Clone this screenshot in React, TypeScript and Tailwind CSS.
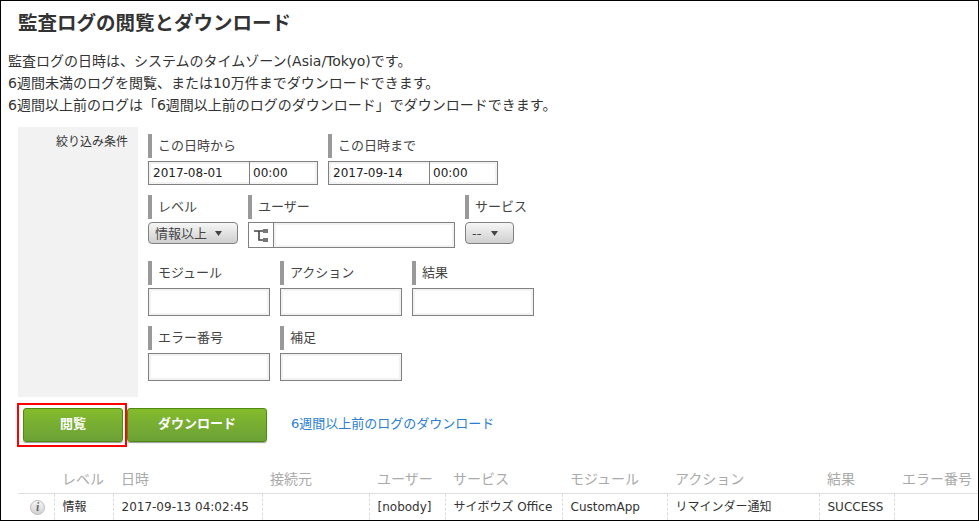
const font = '[font-family:"DejaVu_Sans","Noto_Sans_CJK_JP",sans-serif]'

const Field = ({ label, className, children }: { label: string; className: string; children: React.ReactNode }) => (
    <div className={className}>
        <div className="h-[24px] border-l-[4px] border-[#999999] pl-[6px] text-[13px] leading-[24px] text-[#444444]">{label}</div>
        <div className="mt-[3px]">{children}</div>
    </div>
)

const TextBox = ({ className }: { className: string }) => (
    <div className={`border border-[#808080] bg-white shadow-[inset_0_0_0_2px_#f2f2f2] ${className}`} />
)

const DateBox = ({ date }: { date: string }) => (
    <div className="flex h-[24px] w-[170px] border border-[#808080] bg-white text-[12px] leading-[23px] text-[#222222] shadow-[inset_0_0_0_2px_#f2f2f2]">
        <div className="w-[101px] border-r border-[#808080] pl-[4px]">{date}</div>
        <div className="pl-[3px]">00:00</div>
    </div>
)

const SelectButton = ({ label, className }: { label: string; className: string }) => (
    <div className={`flex h-[22px] items-center rounded-[4px] border border-[#808080] bg-gradient-to-b from-[#f6f6f6] to-[#cfcfcf] pl-[6px] text-[13px] leading-none text-[#444444] ${className}`}>
        <span>{label}</span>
        <svg className="ml-auto mr-[15px]" width="7" height="5" viewBox="0 0 7 5">
            <path d="M0 0h7L3.5 5z" fill="#444444" />
        </svg>
    </div>
)

const columns = [
    { label: '', value: '', width: 'w-[36px]' },
    { label: 'レベル', value: '情報', width: 'w-[59px]' },
    { label: '日時', value: '2017-09-13 04:02:45', width: 'w-[149px]' },
    { label: '接続元', value: '', width: 'w-[107px]' },
    { label: 'ユーザー', value: '[nobody]', width: 'w-[76px]' },
    { label: 'サービス', value: 'サイボウズ Office', width: 'w-[117px]' },
    { label: 'モジュール', value: 'CustomApp', width: 'w-[105px]' },
    { label: 'アクション', value: 'リマインダー通知', width: 'w-[152px]' },
    { label: '結果', value: 'SUCCESS', width: 'w-[75px]' },
    { label: 'エラー番号', value: '', width: 'w-[84px]' },
]

export default function App() {
    return (
        <div className={`h-[521px] w-[979px] overflow-hidden border border-black bg-white text-[#333333] ${font}`}>
            <h1 className="ml-[17px] mt-[10px] text-[19.5px] font-bold leading-[26px] text-[#333333]">監査ログの閲覧とダウンロード</h1>

            <div className="ml-[7px] mt-[13px] text-[14px] leading-[22px] text-[#333333]">
                <p>監査ログの日時は、システムのタイムゾーン(Asia/Tokyo)です。</p>
                <p>6週間未満のログを閲覧、または10万件までダウンロードできます。</p>
                <p>6週間以上前のログは「6週間以上前のログのダウンロード」でダウンロードできます。</p>
            </div>

            <div className="ml-[17px] mt-[11px] flex">
                <div className="h-[270px] w-[120px] bg-[#f2f2f2] pr-[10px] pt-[6px] text-right text-[12px] leading-[18px] text-[#333333]">絞り込み条件</div>

                <div className="ml-[10px] pt-[7px]">
                    <div className="flex gap-[10px]">
                        <Field label="この日時から" className="w-[170px]"><DateBox date="2017-08-01" /></Field>
                        <Field label="この日時まで" className="w-[170px]"><DateBox date="2017-09-14" /></Field>
                    </div>

                    <div className="mt-[10px] flex gap-[10px]">
                        <Field label="レベル" className="w-[90px]"><SelectButton label="情報以上" className="w-[90px]" /></Field>
                        <Field label="ユーザー" className="w-[207px]">
                            <div className="flex h-[26px] w-[207px] border border-[#808080] bg-white">
                                <div className="flex w-[25px] items-center justify-center border-r border-[#808080]">
                                    <svg width="14" height="13" viewBox="0 0 14 13">
                                        <path d="M0 2h10M5 2v9h5" stroke="#444444" strokeWidth="1.6" fill="none" />
                                        <rect x="9" y="0" width="5" height="4" fill="#777777" />
                                        <rect x="9" y="9" width="5" height="4" fill="#777777" />
                                    </svg>
                                </div>
                                <div className="flex-1 shadow-[inset_0_0_0_2px_#f2f2f2]" />
                            </div>
                        </Field>
                        <Field label="サービス" className="w-[62px]"><SelectButton label="--" className="w-[49px]" /></Field>
                    </div>

                    <div className="mt-[13px] flex gap-[10px]">
                        <Field label="モジュール" className="w-[122px]"><TextBox className="h-[28px] w-[122px]" /></Field>
                        <Field label="アクション" className="w-[122px]"><TextBox className="h-[28px] w-[122px]" /></Field>
                        <Field label="結果" className="w-[122px]"><TextBox className="h-[28px] w-[122px]" /></Field>
                    </div>

                    <div className="mt-[10px] flex gap-[10px]">
                        <Field label="エラー番号" className="w-[122px]"><TextBox className="h-[28px] w-[122px]" /></Field>
                        <Field label="補足" className="w-[122px]"><TextBox className="h-[28px] w-[122px]" /></Field>
                    </div>
                </div>
            </div>

            <div className="ml-[16px] mt-[6px] flex items-center">
                <div className="border-[2px] border-[#ff0000] pb-[3px] pl-[4px] pr-[2px] pt-[3px]">
                    <button className="block h-[34px] w-[100px] rounded-[3px] border border-[#4f8a10] bg-gradient-to-b from-[#84bb2c] to-[#6ba136] pb-[3px] text-[13px] font-bold text-white shadow-[0_1px_1px_#9a9a9a]">閲覧</button>
                </div>
                <button className="h-[34px] w-[140px] rounded-[3px] border border-[#4f8a10] bg-gradient-to-b from-[#84bb2c] to-[#6ba136] pb-[3px] text-[13px] font-bold text-white shadow-[0_1px_1px_#9a9a9a]">ダウンロード</button>
                <a href="#" className="mb-[2px] ml-[24px] text-[13px] text-[#2b7ed1]">6週間以上前のログのダウンロード</a>
            </div>

            <table className="ml-[17px] mt-[20px] table-fixed border-collapse">
                <thead>
                    <tr className="border-b border-[#dddddd]">
                        {columns.map((c, i) => (
                            <th key={i} className={`${c.width} h-[26px] overflow-hidden whitespace-nowrap pl-[8px] text-left text-[14px] font-normal text-[#aaaaaa]`}>{c.label}</th>
                        ))}
                    </tr>
                </thead>
                <tbody>
                    <tr>
                        {columns.map((c, i) => (
                            <td key={i} className={`${c.width} h-[27px] overflow-hidden whitespace-nowrap border-l border-dashed border-[#dddddd] pl-[8px] text-[12px] text-[#333333] first:border-l-0`}>
                                {i === 0 ? (
                                    <div className="ml-[4px] mt-[1px] flex h-[15px] w-[15px] items-center justify-center rounded-full border border-[#bbbbbb] bg-gradient-to-b from-[#f5f5f5] to-[#d2d2d2] font-serif text-[11px] font-bold italic leading-none text-[#666666]">i</div>
                                ) : c.value}
                            </td>
                        ))}
                    </tr>
                </tbody>
            </table>
        </div>
    )
}
